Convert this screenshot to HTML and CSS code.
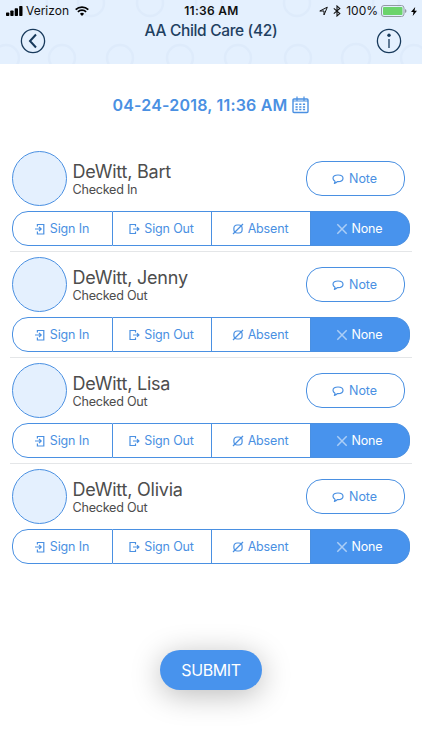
FILE: index.html
```html
<!DOCTYPE html>
<html lang="en">
<head>
<meta charset="utf-8">
<title>AA Child Care</title>
<link rel="stylesheet" href="styles.css">
</head>
<body>
<svg class="sprite" aria-hidden="true">
  <symbol id="in" viewBox="0 0 12 12"><path d="M3.4 3.4V1.500h6.400v9.500H3.400V8.600M1 6h6M5 3.800l2.200 2.200L5 8.200" fill="none" stroke="currentColor" stroke-width="1.200"/></symbol>
  <symbol id="out" viewBox="0 0 12 12"><path d="M7.500 3.600V1.500H2v9h5.500V8.400M5 6h6M9 4.200L10.900 6 9 7.800" fill="none" stroke="currentColor" stroke-width="1.200"/></symbol>
  <symbol id="absent" viewBox="0 0 12 12"><rect x="1.900" y="2" width="8.200" height="8" rx="3.200" fill="none" stroke="currentColor" stroke-width="1.200"/><path d="M1 11L11 1" stroke="currentColor" stroke-width="1.200"/></symbol>
  <symbol id="none" viewBox="0 0 12 12"><path d="M1.300 1.300l9.400 9.400M10.700 1.300l-9.400 9.400" stroke="currentColor" stroke-width="1.500"/></symbol>
  <symbol id="note" viewBox="0 0 12 12"><path d="M3 8.200C1.600 7.500 1 6.400 1 5.300 1 3.200 3.200 2 6 2s5 1.200 5 3.200-2.100 3.400-5 3.400h-.7C4.600 9.500 3.700 10.100 2.400 10.300 3 9.600 3.200 9 3 8.200z" fill="none" stroke="currentColor" stroke-width="1.200" stroke-linejoin="round"/></symbol>
</svg>
<header class="header">
  <svg class="pattern" width="422" height="64" viewBox="0 0 422 64" aria-hidden="true">
    <circle cx="6" cy="58" r="13"/><circle cx="62" cy="58" r="13"/><circle cx="120" cy="58" r="13"/><circle cx="180" cy="58" r="13"/><circle cx="238" cy="58" r="13"/><circle cx="298" cy="58" r="13"/><circle cx="356" cy="58" r="14"/><circle cx="414" cy="58" r="13"/>
    <circle cx="34" cy="3" r="13"/><circle cx="91" cy="3" r="13"/><circle cx="150" cy="3" r="13"/><circle cx="209" cy="3" r="13"/><circle cx="297" cy="3" r="13"/><circle cx="386" cy="3" r="13"/>
  </svg>
  <div class="status">
    <div class="carrier">
      <svg width="17" height="10" viewBox="0 0 17 10"><rect x="0" y="6.500" width="3.300" height="3.500" rx=".7"/><rect x="4.300" y="4.500" width="3.300" height="5.500" rx=".7"/><rect x="8.700" y="2.300" width="3.300" height="7.700" rx=".7"/><rect x="13.200" y="0" width="3.300" height="10" rx=".7"/></svg>
      <span class="carrier-name">Verizon</span>
      <svg width="14" height="10" viewBox="0 0 14 10"><path d="M7 10L4.900 7.800a3 3 0 0 1 4.200 0z"/><path d="M2.900 5.900a5.800 5.800 0 0 1 8.200 0M.7 3.600a9 9 0 0 1 12.600 0" fill="none" stroke="#000" stroke-width="1.700"/></svg>
    </div>
    <span class="clock">11:36 AM</span>
    <div class="power">
      <svg width="9" height="10" viewBox="0 0 9 10"><path d="M.8 5L8.300 1.200 5 9V5z" fill="none" stroke="#111" stroke-width="1"/></svg>
      <svg width="8" height="12" viewBox="0 0 8 12"><path d="M.8 3.300l6 5.300L4 11V1l2.800 2.400-6 5.300" fill="none" stroke="#111" stroke-width="1.100"/></svg>
      <span class="percent">100%</span>
      <svg width="26" height="12" viewBox="0 0 26 12"><rect x=".5" y=".5" width="22.500" height="11" rx="2.500" fill="none" stroke="#929aa3"/><rect x="2" y="2" width="19.500" height="8" rx="1" fill="#6bd46c"/><path d="M24 4v4q1.500-.6 1.500-2T24 4" fill="#929aa3"/></svg>
      <svg class="bolt" width="6" height="9" viewBox="0 0 6 9"><path d="M4.200 0L0 5h2.500L1.700 9 6 3.700H3.500z"/></svg>
    </div>
  </div>
  <nav class="nav">
    <svg width="26" height="26" viewBox="0 0 26 26" class="round"><circle cx="13" cy="13" r="11.600"/><path d="M16 6.500L10 13l6 6.500" class="chev"/></svg>
    <h1 class="title">AA Child Care (42)</h1>
    <svg width="26" height="26" viewBox="0 0 26 26" class="round"><circle cx="13" cy="13" r="11.600"/><path d="M13 11v9"/><circle cx="13" cy="7.200" r="1.700" class="dot"/></svg>
  </nav>
</header>
<main>
  <div class="date"><span class="date-text">04-24-2018, 11:36 AM</span>
    <svg width="17" height="18" viewBox="0 0 17 18"><rect x="1" y="3" width="15" height="13.500" rx="1" fill="none" stroke="currentColor" stroke-width="1.400"/><path d="M5 .5v4M12 .5v4M1 5h15" stroke="currentColor" stroke-width="1.200"/><path d="M3.500 8.200h10M3.500 10.900h10M3.500 13.600h10" stroke="currentColor" stroke-width="1.500" stroke-dasharray="2.200 1.500"/></svg>
  </div>
  <ul class="list">
    <li class="child">
      <div class="info"><div class="avatar"></div><div class="who"><div class="name">DeWitt, Bart</div><div class="state">Checked In</div></div><button class="note"><svg class="icon"><use href="#note"/></svg><span>Note</span></button></div>
      <div class="actions"><button class="seg"><svg class="icon"><use href="#in"/></svg><span>Sign In</span></button><button class="seg"><svg class="icon"><use href="#out"/></svg><span>Sign Out</span></button><button class="seg"><svg class="icon"><use href="#absent"/></svg><span>Absent</span></button><button class="seg active"><svg class="icon"><use href="#none"/></svg><span>None</span></button></div>
    </li>
    <li class="child">
      <div class="info"><div class="avatar"></div><div class="who"><div class="name">DeWitt, Jenny</div><div class="state">Checked Out</div></div><button class="note"><svg class="icon"><use href="#note"/></svg><span>Note</span></button></div>
      <div class="actions"><button class="seg"><svg class="icon"><use href="#in"/></svg><span>Sign In</span></button><button class="seg"><svg class="icon"><use href="#out"/></svg><span>Sign Out</span></button><button class="seg"><svg class="icon"><use href="#absent"/></svg><span>Absent</span></button><button class="seg active"><svg class="icon"><use href="#none"/></svg><span>None</span></button></div>
    </li>
    <li class="child">
      <div class="info"><div class="avatar"></div><div class="who"><div class="name">DeWitt, Lisa</div><div class="state">Checked Out</div></div><button class="note"><svg class="icon"><use href="#note"/></svg><span>Note</span></button></div>
      <div class="actions"><button class="seg"><svg class="icon"><use href="#in"/></svg><span>Sign In</span></button><button class="seg"><svg class="icon"><use href="#out"/></svg><span>Sign Out</span></button><button class="seg"><svg class="icon"><use href="#absent"/></svg><span>Absent</span></button><button class="seg active"><svg class="icon"><use href="#none"/></svg><span>None</span></button></div>
    </li>
    <li class="child">
      <div class="info"><div class="avatar"></div><div class="who"><div class="name">DeWitt, Olivia</div><div class="state">Checked Out</div></div><button class="note"><svg class="icon"><use href="#note"/></svg><span>Note</span></button></div>
      <div class="actions"><button class="seg"><svg class="icon"><use href="#in"/></svg><span>Sign In</span></button><button class="seg"><svg class="icon"><use href="#out"/></svg><span>Sign Out</span></button><button class="seg"><svg class="icon"><use href="#absent"/></svg><span>Absent</span></button><button class="seg active"><svg class="icon"><use href="#none"/></svg><span>None</span></button></div>
    </li>
  </ul>
  <button class="submit">SUBMIT</button>
</main>
</body>
</html>
```
FILE: styles.css
```css
* { box-sizing: border-box; }
body { margin: 0; height: 750px; overflow: hidden; background: #fff; font-family: Inter, "Liberation Sans", sans-serif; color: #4d4d4d; }
svg { display: block; flex: none; }
button { font: inherit; margin: 0; padding: 0; border: 0; background: none; }
.sprite { position: absolute; width: 0; height: 0; }

.header { position: relative; height: 64px; background: #e4f0fe; overflow: hidden; }
.pattern { position: absolute; left: 0; top: 0; fill: none; stroke: #deebfb; stroke-width: 2.5; }
.status { position: relative; height: 20px; padding: 1px 5px 0 6px; display: grid; grid-template-columns: 1fr auto 1fr; align-items: center; font-size: 12px; line-height: 20px; color: #111; }
.carrier, .power { display: flex; align-items: center; }
.carrier-name { margin: 0 6px 0 3px; font-size: 12px; }
.clock { font-weight: 600; font-size: 12px; letter-spacing: 0.3px; }
.power { justify-content: flex-end; gap: 5px; }
.percent { margin-right: -2px; }
.bolt { margin-left: -1px; }
.nav { position: relative; display: flex; justify-content: space-between; height: 44px; padding: 8px 20px 0; }
.title { margin: -8px 0 0; font-size: 15.500px; letter-spacing: -0.33px; line-height: 21px; font-weight: 500; color: #1f3f61; }
.round { fill: none; stroke: #17395b; stroke-width: 1.3; }
.chev { stroke-width: 2; }
.dot { fill: #17395b; stroke: none; }

.date { display: flex; justify-content: center; align-items: center; gap: 5px; height: 24px; margin-top: 29px; color: #4a90e2; }
.date-text { font-size: 16px; font-weight: 600; letter-spacing: 0.19px; }

.list { list-style: none; margin: 29px 10px 0; padding: 0; }
.child { height: 106px; padding: 5px 2px 0; border-bottom: 1px solid #e4e6e8; }
.child:last-child { border-bottom-color: transparent; }
.info { display: flex; align-items: center; height: 55px; padding-right: 5px; }
.avatar { width: 55px; height: 55px; border: 1px solid #4a90e2; border-radius: 50%; background: #e4f0fe; }
.who { flex: 1; margin: 2px 0 0 5.500px; }
.name { font-size: 18px; line-height: 21px; letter-spacing: -0.22px; }
.state { font-size: 12.600px; line-height: 16px; letter-spacing: -0.25px; }
.note { display: flex; align-items: center; justify-content: center; gap: 5px; width: 99px; height: 35px; padding-right: 2px; border: 1px solid #4a90e2; border-radius: 16px; color: #4a90e2; font-size: 12.500px; letter-spacing: -0.1px; }
.icon { width: 12px; height: 12px; }
.actions { display: grid; grid-template-columns: 101px 99px 99px 99px; height: 35px; width: 398px; margin-top: 5px; }
.seg { display: flex; align-items: center; justify-content: center; gap: 4px; padding-right: 2px; border: 1px solid #4a90e2; color: #4a90e2; font-size: 12.500px; letter-spacing: -0.15px; }
.seg + .seg { border-left: 0; }
.seg:first-child { border-radius: 16px 0 0 16px; }
.seg:last-child { border-radius: 0 16px 16px 0; }
.active { background: #4893ed; color: #fff; }
.active .icon { opacity: .55; }

.submit { display: block; width: 102px; height: 40px; margin: 80px auto 0; border-radius: 20px; background: #4893ed; color: #fff; font-size: 16px; letter-spacing: -0.4px; box-shadow: 0 5px 30px rgba(0, 0, 0, .27); }
```
